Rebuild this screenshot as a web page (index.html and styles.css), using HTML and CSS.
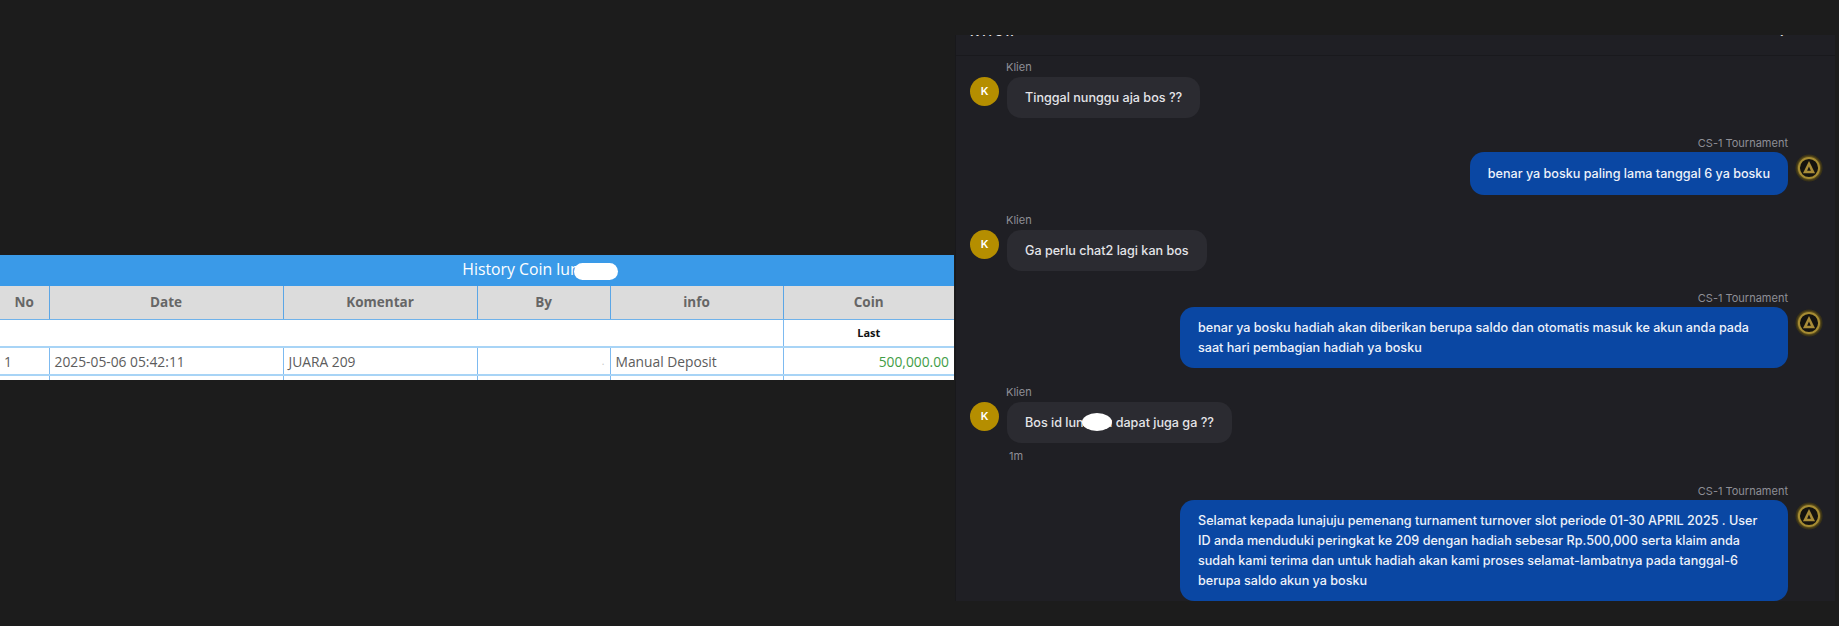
FILE: index.html
```html
<!DOCTYPE html>
<html lang="id">
<head>
<meta charset="utf-8">
<title>History Coin</title>
<link rel="stylesheet" href="styles.css">
</head>
<body>
<svg class="defs" aria-hidden="true">
  <symbol id="cs-logo" viewBox="0 0 30 30">
    <circle cx="15" cy="15" r="14.5" fill="#3a3318"/>
    <circle cx="15" cy="15" r="13" fill="#5a4c1c"/>
    <circle cx="15" cy="15" r="10.8" fill="#14130f" stroke="#a68c33" stroke-width="2.2"/>
    <path d="M15 7.5 21.5 20.5H8.500Z" fill="#a88c38"/>
    <path d="M15 13.500 17 18H13Z" fill="#14130f"/>
  </symbol>
</svg>
<main class="page">
  <section class="history">
    <div class="table-clip">
      <div class="table-title"><span class="title-text">History Coin lunajuju<span class="blob blob-title"></span></span></div>
      <table class="coin-table">
        <colgroup>
          <col class="c-no"><col class="c-date"><col class="c-komentar"><col class="c-by"><col class="c-info"><col class="c-coin">
        </colgroup>
        <thead>
          <tr><th>No</th><th>Date</th><th>Komentar</th><th>By</th><th>info</th><th>Coin</th></tr>
        </thead>
        <tbody>
          <tr class="row-last"><td colspan="5"></td><td class="last">Last</td></tr>
          <tr class="row-data"><td>1</td><td>2025-05-06 05:42:11</td><td>JUARA 209</td><td class="by">.</td><td>Manual Deposit</td><td class="amount">500,000.00</td></tr>
          <tr class="row-data"><td></td><td></td><td></td><td></td><td></td><td></td></tr>
        </tbody>
      </table>
    </div>
  </section>

  <section class="chat">
    <header class="chat-head"><span class="chat-name">Klien</span><span class="chat-tool">.</span></header>
    <div class="messages">
      <article class="msg peer">
        <div class="who">Klien</div>
        <div class="line">
          <div class="avatar">K</div>
          <div class="bubble">Tinggal nunggu aja bos ??</div>
        </div>
      </article>

      <article class="msg own gap-a">
        <div class="who">CS-1 Tournament</div>
        <div class="line">
          <div class="bubble tall">benar ya bosku paling lama tanggal 6 ya bosku</div>
          <svg class="logo" aria-hidden="true"><use href="#cs-logo"/></svg>
        </div>
      </article>

      <article class="msg peer gap-b">
        <div class="who">Klien</div>
        <div class="line">
          <div class="avatar">K</div>
          <div class="bubble">Ga perlu chat2 lagi kan bos</div>
        </div>
      </article>

      <article class="msg own gap-c">
        <div class="who">CS-1 Tournament</div>
        <div class="line">
          <div class="bubble">benar ya bosku hadiah akan diberikan berupa saldo dan otomatis masuk ke akun anda pada saat hari pembagian hadiah ya bosku</div>
          <svg class="logo" aria-hidden="true"><use href="#cs-logo"/></svg>
        </div>
      </article>

      <article class="msg peer gap-a">
        <div class="who">Klien</div>
        <div class="line">
          <div class="avatar">K</div>
          <div class="bubble">Bos id lunajuju dapat juga ga ??<span class="blob blob-chat"></span></div>
        </div>
        <div class="time">1m</div>
      </article>

      <article class="msg own gap-d">
        <div class="who">CS-1 Tournament</div>
        <div class="line">
          <div class="bubble">Selamat kepada lunajuju pemenang turnament turnover slot periode 01-30 APRIL 2025 . User ID anda menduduki peringkat ke 209 dengan hadiah sebesar Rp.500,000 serta klaim anda sudah kami terima dan untuk hadiah akan kami proses selamat-lambatnya pada tanggal-6 berupa saldo akun ya bosku</div>
          <svg class="logo" aria-hidden="true"><use href="#cs-logo"/></svg>
        </div>
      </article>
    </div>
  </section>
</main>
</body>
</html>
```

FILE: styles.css
```css
* { box-sizing: border-box; }

html, body {
  margin: 0;
  height: 100%;
  background: #1c1c1c;
}

.defs { display: none; }

.page {
  display: flex;
  align-items: flex-start;
  height: 626px;
  overflow: hidden;
}

/* Left: coin history table */
.history {
  flex: 0 0 955px;
  padding-top: 255px;
  padding-right: 1px;
}

.table-clip {
  height: 125px;
  overflow: hidden;
  background: #fff;
  font-family: "Open Sans", "Noto Sans", sans-serif;
}

.table-title {
  height: 31px;
  padding-left: 124px;
  background: #3a9ae8;
  color: #fff;
  font-size: 15.8px;
  line-height: 29px;
  text-align: center;
}

.title-text { position: relative; display: inline-block; }

.blob {
  position: absolute;
  background: #fff;
  border-radius: 50%;
}

.blob-title {
  right: -2px;
  top: 8px;
  width: 44px;
  height: 17px;
  border-radius: 9px;
}

.coin-table {
  width: 954px;
  table-layout: fixed;
  border-collapse: collapse;
  font-size: 13.8px;
  color: #5c5c5c;
}

.c-no { width: 49px; }
.c-date { width: 234px; }
.c-komentar { width: 194px; }
.c-by { width: 133px; }
.c-info { width: 173px; }
.c-coin { width: 171px; }

.coin-table th {
  height: 33px;
  padding: 0;
  background: #dcdcdc;
  color: #666;
  font-weight: 700;
  font-size: 13.5px;
  border-left: 1px solid #5ba6e6;
  border-bottom: 1px solid #6fb2ea;
}

.coin-table th:first-child,
.coin-table td:first-child { border-left: 0; }

.coin-table td {
  padding: 0 5px;
  border-left: 1px solid #7dbaf0;
  border-bottom: 2px solid #a8d4f6;
  white-space: nowrap;
}

.coin-table td:first-child { padding-left: 4px; }

.row-last td { height: 28px; }
.row-data td { height: 28px; }

.coin-table .last {
  color: #111;
  font-size: 11px;
  font-weight: 700;
  text-align: center;
}

.coin-table .amount {
  color: #3f9d46;
  text-align: right;
}

.coin-table .by {
  color: #c4c4c4;
  font-size: 10px;
  text-align: right;
}

/* Right: chat */
.chat {
  flex: 0 0 880px;
  height: 566px;
  margin-top: 35px;
  overflow: hidden;
  background: #1f1f24;
  border-left: 1px solid #18181b;
  font-family: Inter, "Noto Sans", sans-serif;
  color: #e4e4e8;
}

.chat-head {
  display: flex;
  justify-content: space-between;
  height: 21px;
  padding: 0 51px 0 14px;
  overflow: hidden;
  border-bottom: 1px solid #19191d;
  font-size: 13px;
  font-weight: 600;
  line-height: 16px;
}

.chat-name, .chat-tool { margin-top: -12.5px; }
.chat-name { letter-spacing: 3px; }

.messages {
  display: flex;
  flex-direction: column;
  padding: 4px 12px 0 14px;
}

.msg { display: flex; flex-direction: column; align-items: flex-start; }
.msg.own { align-items: flex-end; }

.gap-a { margin-top: 17px; }
.gap-b { margin-top: 18px; }
.gap-c { margin-top: 19px; }
.gap-d { margin-top: 20px; }

.who {
  height: 14px;
  margin-bottom: 3px;
  color: #8e8e96;
  font-size: 11px;
  line-height: 14px;
}

.peer .who { padding-left: 36px; }
.own .who { position: relative; top: 1px; padding-right: 35px; }

.line { display: flex; align-items: flex-start; gap: 8px; }
.own .line { gap: 7px; }

.avatar {
  flex: none;
  display: flex;
  align-items: center;
  justify-content: center;
  width: 29px;
  height: 29px;
  padding-bottom: 1px;
  border-radius: 50%;
  background: #b58e00;
  color: #fff;
  font-size: 11px;
  font-weight: 600;
}

.bubble {
  position: relative;
  max-width: 608px;
  padding: 10.5px 18px;
  border-radius: 14px;
  background: #2b2b31;
  color: #e4e4e8;
  font-size: 12.6px;
  font-weight: 500;
  line-height: 20px;
}

.bubble.tall { padding: 11.5px 18px; }

.own .bubble { background: #0a47a3; color: #eef2fa; }

.logo {
  flex: none;
  width: 28px;
  height: 28px;
  margin-top: 2px;
  filter: blur(0.6px);
}

.blob-chat {
  left: 75px;
  top: 11px;
  width: 30px;
  height: 18px;
}

.time {
  margin: 6px 0 0 39px;
  color: #8e8e96;
  font-size: 11px;
  line-height: 14px;
}
```
